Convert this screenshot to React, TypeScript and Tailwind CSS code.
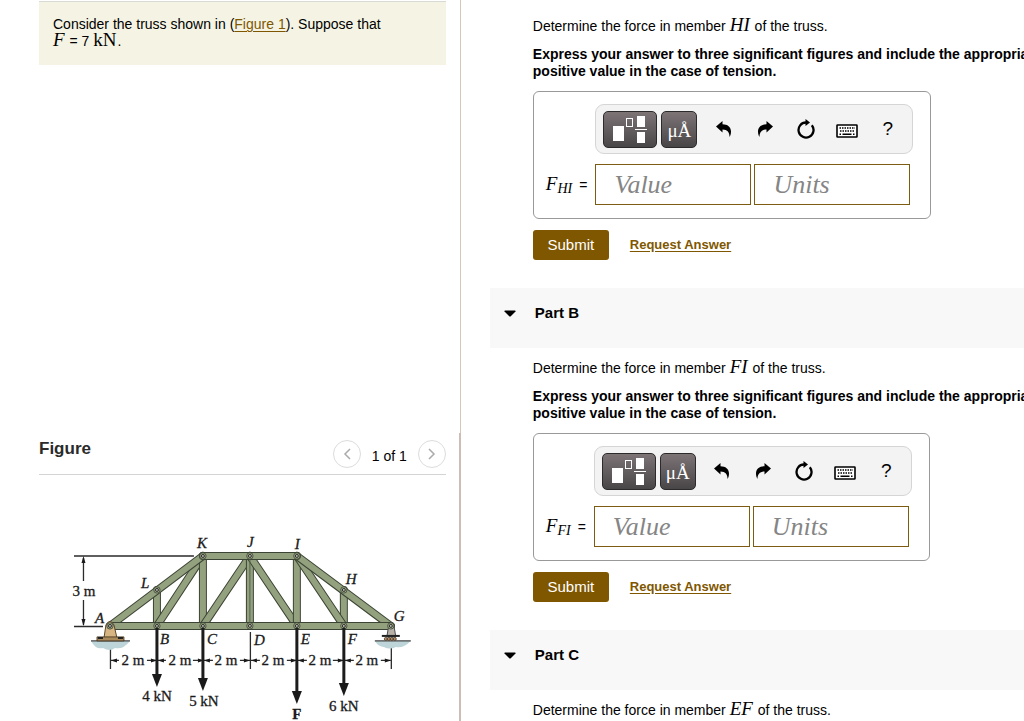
import { ReactNode } from "react";

type Point = [number, number];

const joints: Record<string, Point> = {
  A: [110, 626],
  B: [157, 626],
  C: [203, 626],
  D: [250, 626],
  E: [297, 626],
  F: [344, 626],
  G: [391, 626],
  H: [344, 590],
  I: [297, 556],
  J: [250, 556],
  K: [203, 556],
  L: [157, 590],
};

const members = ["LB", "HF", "KB", "KC", "JC", "JD", "JE", "IE", "IF", "AK", "IG", "AG", "KI"];

const jointLabels: [string, number, number][] = [
  ["K", 197, 548],
  ["J", 247, 547],
  ["I", 295, 549],
  ["L", 141, 588],
  ["H", 346, 584],
  ["A", 95, 623],
  ["G", 394, 621],
  ["B", 160, 644],
  ["C", 207, 644],
  ["D", 254, 645],
  ["E", 301, 644],
  ["F", 348, 644],
];

const loads: [number, number][] = [
  [157, 687],
  [203, 691],
  [297, 704],
  [344, 696],
];

function TrussFigure() {
  return (
    <svg
      viewBox="39 475 407 246"
      className="block w-full"
      role="img"
      aria-label="Truss supported at A and G with loads at B, C, E and F"
      fontFamily="'Liberation Serif', serif"
      fontSize="15"
      fill="#1a1a1a"
    >
      <g stroke="#2b2b2b" strokeWidth="1.3">
        <path d="M74 556H194M74 626.500H103" strokeWidth="1.500" />
        <path d="M83.500 558V581M83.500 600V625" />
        <path d="M110.500 641V669M250.500 632V669M391.500 642V669" />
        <path d="M111 660.500H119M147 660.500H166M193 660.500H213M240 660.500H260M287 660.500H307M333 660.500H354M381 660.500H391" />
      </g>
      <path d="M83.500 556l-2 7h4zM83.500 626l-2-7h4z" />
      {[111, 158, 204, 251, 298, 345].map((x) => (
        <path key={x} d={`M${x} 660.500l6-2v4zM${x + 46} 660.500l-6-2v4z`} />
      ))}

      <path d="M91 641H130Q123 650 115 648Q110 652 103 648Q96 650 91 641Z" fill="#bdd5d9" />
      <path d="M375 641H411Q403 649 396 647Q390 650 384 647Q379 647 375 641Z" fill="#bdd5d9" />
      <path d="M91 641H130M375 641H411" stroke="#444" strokeWidth="1.200" />

      {members.map((m) => {
        const [x1, y1] = joints[m[0]];
        const [x2, y2] = joints[m[1]];
        return (
          <g key={m}>
            <line x1={x1} y1={y1} x2={x2} y2={y2} stroke="#3c4535" strokeWidth="8" strokeLinecap="round" />
            <line x1={x1} y1={y1} x2={x2} y2={y2} stroke="#94a17f" strokeWidth="6" strokeLinecap="round" />
          </g>
        );
      })}
      <path d="M250 560V622" stroke="#56604a" strokeWidth="1" />

      <path d="M104 638L106 625Q110 618 114 625L117 638Z" fill="#d6b583" stroke="#5c4526" />
      <path d="M97 637H124V641H97Z" fill="#a98a5a" stroke="#3a2c18" strokeWidth="0.800" />
      <path d="M98 637h5v2h-5zM118 637h5v2h-5z" fill="#222" />
      <path d="M387 637L389 625Q391 620 394 625L396 637Z" fill="#b7b1a8" stroke="#4a4a4a" />
      <path d="M382 636H400" stroke="#222" strokeWidth="2" />
      {[386, 389, 392, 395].map((x) => (
        <circle key={x} cx={x} cy="639" r="1.500" fill="#b98f6d" stroke="#3a2c18" strokeWidth="0.700" />
      ))}

      {Object.entries(joints).map(([name, [x, y]]) => (
        <g key={name}>
          <circle cx={x} cy={y} r="3.200" fill="#9aa785" stroke="#3c4535" strokeWidth="0.800" />
          <circle cx={x} cy={y} r="1.500" fill="#b9b9b0" stroke="#222" strokeWidth="0.900" />
        </g>
      ))}

      {loads.map(([x, y]) => (
        <g key={x}>
          <path d={`M${x} 628V${y - 11}`} stroke="#1c1c1c" strokeWidth="3" />
          <path d={`M${x} ${y}l-5-13h10z`} />
        </g>
      ))}

      <g fontStyle="italic" stroke="#1a1a1a" strokeWidth="0.300">
        {jointLabels.map(([name, x, y]) => (
          <text key={name} x={x} y={y}>
            {name}
          </text>
        ))}
      </g>
      <g stroke="#1a1a1a" strokeWidth="0.300" textAnchor="middle">
        <text x="84" y="596">3 m</text>
        {[133, 180, 226, 273, 320, 367].map((x) => (
          <text key={x} x={x} y="665">2 m</text>
        ))}
        <text x="157" y="701">4 kN</text>
        <text x="204" y="706">5 kN</text>
        <text x="344" y="711">6 kN</text>
        <text x="297" y="719" fontWeight="bold">F</text>
      </g>
    </svg>
  );
}

function MathText({ children, italic = true }: { children: ReactNode; italic?: boolean }) {
  return (
    <span className={`mr-px font-['Liberation_Serif',serif] text-[19px] leading-0 ${italic ? "italic" : ""}`}>
      {children}
    </span>
  );
}

function TemplatesIcon() {
  return (
    <svg width="36" height="28" viewBox="0 0 36 28" fill="#fff" aria-hidden="true">
      <rect x="1" y="11" width="11" height="15" />
      <rect x="14.500" y="3.500" width="6" height="8" fill="none" stroke="#fff" />
      <rect x="25" y="1" width="8" height="11" />
      <rect x="23" y="14" width="12" height="1" />
      <rect x="25" y="17" width="8" height="11" />
    </svg>
  );
}

const arrow = "M0 5.500L6.500 0V3.200C11.500 3.200 15 6 15 10.500C15 12.800 14.500 14.500 13.500 16C13.600 11.500 11.500 8.400 6.500 8.400V11.500Z";

function UndoIcon() {
  return (
    <svg width="16" height="16" viewBox="0 0 16 16" aria-hidden="true">
      <path d={arrow} />
    </svg>
  );
}

function RedoIcon() {
  return (
    <svg width="16" height="16" viewBox="0 0 16 16" aria-hidden="true">
      <g transform="matrix(-1 0 0 1 16 0)">
        <path d={arrow} />
      </g>
    </svg>
  );
}

function ResetIcon() {
  return (
    <svg width="20" height="20" viewBox="0 0 20 20" aria-hidden="true">
      <path d="M15.800 6.200A7.500 7.500 0 1 1 10 3.500" fill="none" stroke="#000" strokeWidth="2.300" />
      <path d="M9.500 0L14 3.500L9.500 7Z" />
    </svg>
  );
}

function KeyboardIcon() {
  return (
    <svg width="22" height="14" viewBox="0 0 22 14" className="mt-[3px]" aria-hidden="true">
      <rect x="1" y="1" width="20" height="12" rx="0.500" fill="#fff" stroke="#000" strokeWidth="1.600" />
      <path d="M3.500 4H19" stroke="#000" strokeWidth="1.700" strokeDasharray="1.500 1" />
      <path d="M4 7H18.500" stroke="#000" strokeWidth="1.700" strokeDasharray="1.500 1" />
      <path d="M3.500 10.200H5M6.500 10.200H15.500M17 10.200H18.500" stroke="#000" strokeWidth="1.600" />
    </svg>
  );
}

function ToolButton({ label, children }: { label: string; children: ReactNode }) {
  return (
    <button type="button" aria-label={label} className="flex h-9 w-[41px] items-center justify-center">
      {children}
    </button>
  );
}

function AnswerBox({ member }: { member: string }) {
  const darkButton =
    "flex h-[37px] items-center justify-center rounded-[5px] border border-[#2c2a2b] bg-linear-to-b from-[#7d7476] to-[#494648] text-white";
  const field =
    "h-[41px] w-[156px] border border-[#7d5c12] bg-white px-[18px] font-['Liberation_Serif',serif] text-[26px] italic outline-none placeholder:text-[#858585]";
  return (
    <div className="mt-[11px] grid w-fit grid-cols-[auto_auto] items-center gap-x-2 gap-y-[10px] rounded-md border border-[#999] pt-3 pr-[17px] pb-[13px] pl-3">
      <div className="col-start-2 flex h-[50px] items-center rounded-[9px] border border-[#d5d5d5] bg-[#f3f3f3] pr-1 pl-[7px]">
        <button type="button" aria-label="Templates" className={`${darkButton} w-[54px]`}>
          <TemplatesIcon />
        </button>
        <button
          type="button"
          aria-label="Symbols"
          className={`${darkButton} mr-[6px] ml-1 w-9 pt-1 font-['Liberation_Serif',serif] text-[19px]`}
        >
          μÅ
        </button>
        <ToolButton label="Undo"><UndoIcon /></ToolButton>
        <ToolButton label="Redo"><RedoIcon /></ToolButton>
        <ToolButton label="Reset"><ResetIcon /></ToolButton>
        <ToolButton label="Keyboard shortcuts"><KeyboardIcon /></ToolButton>
        <ToolButton label="Help"><span className="text-[19px]">?</span></ToolButton>
      </div>
      <label htmlFor={`value-${member}`} className="flex items-center gap-[6px] whitespace-nowrap">
        <MathText>
          F<sub className="text-sm leading-0">{member}</sub>
        </MathText>
        <span>=</span>
      </label>
      <div className="flex gap-[3px]">
        <input id={`value-${member}`} placeholder="Value" className={field} />
        <input aria-label={`Units of F ${member}`} placeholder="Units" className={field} />
      </div>
    </div>
  );
}

function Question({ member, open = true }: { member: string; open?: boolean }) {
  return (
    <div className="pl-[72px] whitespace-nowrap">
      <p className="h-5 leading-5">
        Determine the force in member <MathText>{member}</MathText> of the truss.
      </p>
      {open && (
        <>
          <p className="mt-[10px] leading-[17px] font-bold">
            Express your answer to three significant figures and include the appropriate units. Enter negative
            <br />
            positive value in the case of tension.
          </p>
          <AnswerBox member={member} />
          <div className="mt-[11px] flex items-center gap-[21px] pb-7">
            <button type="button" className="h-[30px] w-[76px] rounded-[3px] bg-[#7f5700] text-[15px] text-white">
              Submit
            </button>
            <a href="#request" className="text-[13px] font-bold text-[#7f5700] underline underline-offset-2">
              Request Answer
            </a>
          </div>
        </>
      )}
    </div>
  );
}

function PartHeader({ name }: { name: string }) {
  return (
    <h2 className="mb-[10px] ml-[29px] h-[60px] bg-[#f8f8f8] pt-[15px] text-[15px] font-bold">
      <button type="button" aria-expanded="true" className="flex h-5 items-center gap-[19px] pl-[14px]">
        <svg width="12" height="7" viewBox="0 0 12 7" aria-hidden="true">
          <path d="M1 0.500H11Q12 0.500 11.500 1.500L7 6Q6 7 5 6L0.500 1.500Q0 0.500 1 0.500Z" />
        </svg>
        {name}
      </button>
    </h2>
  );
}

function PagerButton({ label, path }: { label: string; path: string }) {
  return (
    <button
      type="button"
      aria-label={label}
      className="flex size-7 items-center justify-center rounded-full border border-[#dcdcdc]"
    >
      <svg width="8" height="12" viewBox="0 0 8 12" fill="none" stroke="#aaa" strokeWidth="1.500" aria-hidden="true">
        <path d={path} />
      </svg>
    </button>
  );
}

export default function App() {
  return (
    <div className="flex min-h-screen bg-white font-['Liberation_Sans',Arial,sans-serif] text-sm text-black">
      <aside className="flex w-[45%] shrink-0 flex-col">
        <div className="h-[433px] border-r border-[#d9c4ba] pr-[14px] pl-[39px]">
          <div className="mt-px h-16 border-t border-[#d8dbd5] bg-[#f5f4e4] px-[14px] pt-[14px] leading-[17px]">
            <p>
              Consider the truss shown in (
              <a href="#figure" className="text-[#7f5700] underline underline-offset-2">
                Figure 1
              </a>
              ). Suppose that
              <br />
              <MathText>F</MathText> = 7 <MathText italic={false}>kN</MathText>.
            </p>
          </div>
        </div>
        <section id="figure" className="flex-1 border-r-2 border-[#cdbdb4] pr-[13px] pl-[39px]">
          <div className="flex h-[42px] justify-between border-b border-[#d4d4d4]">
            <h2 className="pt-[5px] text-[17px] leading-[22px] font-bold text-[#2b2b2b]">Figure</h2>
            <div className="flex h-7 items-center gap-[11px] self-center">
              <PagerButton label="Previous figure" path="M7 1L2 6L7 11" />
              <span className="pt-1">1 of 1</span>
              <PagerButton label="Next figure" path="M1 1L6 6L1 11" />
            </div>
          </div>
          <TrussFigure />
        </section>
      </aside>
      <main className="min-w-0 flex-1 overflow-hidden pt-4">
        <Question member="HI" />
        <PartHeader name="Part B" />
        <Question member="FI" />
        <PartHeader name="Part C" />
        <Question member="EF" open={false} />
      </main>
    </div>
  );
}
